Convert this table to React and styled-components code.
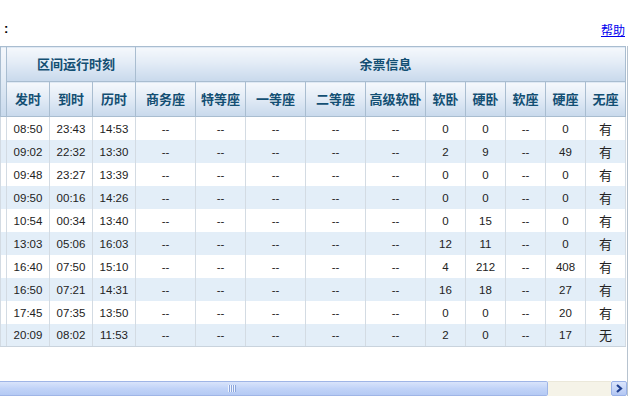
import styled, { createGlobalStyle } from "styled-components";

const GlobalStyle = createGlobalStyle`
  html, body {
    margin: 0;
    padding: 0;
    background: #fff;
  }
  body {
    font-family: "Liberation Sans", "Noto Sans CJK SC", sans-serif;
  }
`;

const seatCols = ["商务座", "特等座", "一等座", "二等座", "高级软卧", "软卧", "硬卧", "软座", "硬座", "无座"];
const widths = [6, 43, 43, 43, 60, 50, 60, 60, 60, 40, 40, 40, 40, 40];

const rows = [
  ["08:50", "23:43", "14:53", "0", "0", "0", "有"],
  ["09:02", "22:32", "13:30", "2", "9", "49", "有"],
  ["09:48", "23:27", "13:39", "0", "0", "0", "有"],
  ["09:50", "00:16", "14:26", "0", "0", "0", "有"],
  ["10:54", "00:34", "13:40", "0", "15", "0", "有"],
  ["13:03", "05:06", "16:03", "12", "11", "0", "有"],
  ["16:40", "07:50", "15:10", "4", "212", "408", "有"],
  ["16:50", "07:21", "14:31", "16", "18", "27", "有"],
  ["17:45", "07:35", "13:50", "0", "0", "20", "有"],
  ["20:09", "08:02", "11:53", "2", "0", "17", "无"],
];

const Page = styled.div`
  width: 629px;
  height: 397px;
  display: flex;
  flex-direction: column;
  overflow: hidden;
`;

const TopBar = styled.div`
  height: 46px;
  box-sizing: border-box;
  display: flex;
  justify-content: space-between;
  align-items: flex-end;
  padding: 0 4px 9px 4px;
`;

const Colon = styled.span`
  font-family: "Liberation Sans", sans-serif;
  font-weight: bold;
  font-size: 13px;
  color: #000;
  margin-bottom: 1px;
`;

const HelpLink = styled.a`
  font-family: "Noto Sans CJK SC", sans-serif;
  font-size: 12px;
  line-height: 14px;
  color: #0000ee;
  text-decoration: underline;
  cursor: pointer;
`;

const Viewport = styled.div`
  box-sizing: border-box;
  width: 628px;
  flex: 1;
  border-right: 1px solid #b7c3cf;
  display: flex;
  flex-direction: column;
  margin-bottom: 1px;
`;

const Table = styled.table`
  border-collapse: collapse;
  table-layout: fixed;
  width: 626px;
`;

const HeadCell = styled.th`
  height: 34px;
  padding: 0 0 0 ${(p) => (p.$group ? 10 : 0)}px;
  border: 1px solid #a9bdd0;
  background: linear-gradient(to bottom, #f5f8fc 0%, #e3ecf6 45%, #c8d9ec 100%);
  color: #134f73;
  font-family: "Noto Sans CJK SC", sans-serif;
  font-weight: bold;
  font-size: 13px;
  line-height: 16px;
  text-align: center;
  white-space: nowrap;
  overflow: hidden;
`;

const Row = styled.tr`
  height: 23px;
  background: ${(p) => (p.$alt ? "#e3eef8" : "#ffffff")};
`;

const Cell = styled.td`
  padding: ${(p) => (p.$cjk ? 0 : 2)}px 0 0 0;
  border: 1px solid #d3dbe3;
  border-top: none;
  border-bottom: none;
  text-align: center;
  vertical-align: middle;
  font-family: ${(p) => (p.$cjk ? `"Noto Sans CJK SC", sans-serif` : `"Liberation Sans", sans-serif`)};
  font-size: ${(p) => (p.$cjk ? 13 : 11.5)}px;
  line-height: 15px;
  color: #222;
  white-space: nowrap;
`;

const Body = styled.tbody`
  tr:last-child td {
    border-bottom: 1px solid #c9d3dd;
  }
`;

const Spacer = styled.div`
  flex: 1;
`;

const ScrollBar = styled.div`
  height: 15px;
  display: grid;
  grid-template-columns: 548px 1fr 16px;
  flex-shrink: 0;
`;

const Thumb = styled.div`
  box-sizing: border-box;
  border: 1px solid #9fb5e6;
  border-left: none;
  border-radius: 0 2px 2px 0;
  background: linear-gradient(to bottom, #d9e4fb 0%, #c1d3f8 50%, #b5caf4 100%);
  display: flex;
  align-items: center;
  padding-left: 228px;
`;

const Grip = styled.div`
  display: flex;
  gap: 1px;
  span {
    width: 1px;
    height: 7px;
    background: #eef3fe;
    box-shadow: 1px 0 0 #8ca6dc;
  }
`;

const Track = styled.div`
  background: #f5f3e8;
  border-top: 1px solid #ebe8da;
`;

const ArrowBtn = styled.div`
  box-sizing: border-box;
  border: 1px solid #9ab2e8;
  border-radius: 2px;
  background: linear-gradient(to bottom, #dbe5fc, #b3c7f3);
  display: flex;
  align-items: center;
  justify-content: center;
`;

export default function App() {
  return (
    <Page>
      <GlobalStyle />
      <TopBar>
        <Colon>:</Colon>
        <HelpLink>帮助</HelpLink>
      </TopBar>
      <Viewport>
        <Table>
          <colgroup>
            {widths.map((w, i) => (
              <col key={i} style={{ width: w }} />
            ))}
          </colgroup>
          <thead>
            <tr>
              <HeadCell rowSpan={2} />
              <HeadCell $group colSpan={3}>区间运行时刻</HeadCell>
              <HeadCell $group colSpan={10}>余票信息</HeadCell>
            </tr>
            <tr>
              <HeadCell>发时</HeadCell>
              <HeadCell>到时</HeadCell>
              <HeadCell>历时</HeadCell>
              {seatCols.map((c) => (
                <HeadCell key={c}>{c}</HeadCell>
              ))}
            </tr>
          </thead>
          <Body>
            {rows.map((r, i) => (
              <Row key={i} $alt={i % 2 === 1}>
                <Cell />
                <Cell>{r[0]}</Cell>
                <Cell>{r[1]}</Cell>
                <Cell>{r[2]}</Cell>
                <Cell>--</Cell>
                <Cell>--</Cell>
                <Cell>--</Cell>
                <Cell>--</Cell>
                <Cell>--</Cell>
                <Cell>{r[3]}</Cell>
                <Cell>{r[4]}</Cell>
                <Cell>--</Cell>
                <Cell>{r[5]}</Cell>
                <Cell $cjk>{r[6]}</Cell>
              </Row>
            ))}
          </Body>
        </Table>
        <Spacer />
        <ScrollBar>
          <Thumb>
            <Grip>
              <span />
              <span />
              <span />
              <span />
            </Grip>
          </Thumb>
          <Track />
          <ArrowBtn>
            <svg width="8" height="9" viewBox="0 0 8 9">
              <path d="M2 1 L6 4.5 L2 8" fill="none" stroke="#1f3f8f" strokeWidth="2.2" />
            </svg>
          </ArrowBtn>
        </ScrollBar>
      </Viewport>
    </Page>
  );
}
